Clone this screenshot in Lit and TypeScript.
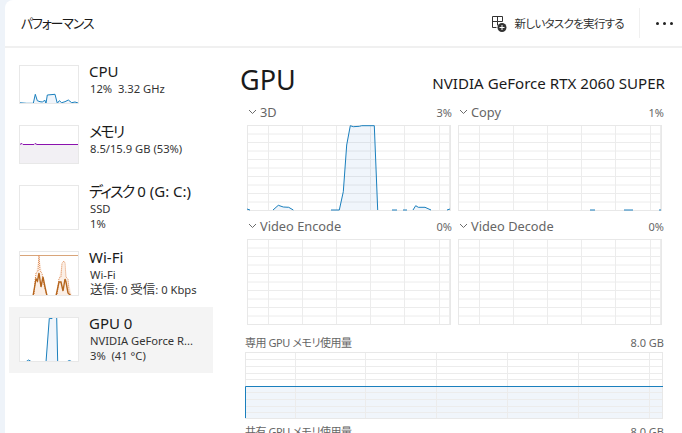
import { html, css, svg, LitElement } from "lit";
import { customElement } from "lit/decorators.js";

type Pt = [number, number];

const BLUE = "#1a7fbd";
// low opacity dark blue, so that the grid still shows through the area
const FILL = "#2a78c0";
const FILL_OP = "0.07";

const line = (pts: Pt[]) => pts.map((p) => p.join(",")).join(" ");

// a trace with the pale area down to the bottom of the chart
const trace = (pts: Pt[], bottom: number) => {
  const area: Pt[] = [[pts[0][0], bottom], ...pts, [pts[pts.length - 1][0], bottom]];
  return svg`
    <polygon points=${line(area)} fill=${FILL} fill-opacity=${FILL_OP}></polygon>
    <polyline points=${line(pts)} fill="none" stroke=${BLUE} stroke-width="1"></polyline>
  `;
};

const grid = (w: number, h: number, xs: number[], ys: number[]) => svg`
  ${xs.map((x) => svg`<line x1=${x + 0.5} x2=${x + 0.5} y1="0" y2=${h} stroke="#ececec"></line>`)}
  ${ys.map((y) => svg`<line x1="0" x2=${w} y1=${y + 0.5} y2=${y + 0.5} stroke="#ececec"></line>`)}
  <rect x="0.5" y="0.5" width=${w - 1} height=${h - 1} fill="none" stroke="#e8e8e8"></rect>
`;

const smallX = [21, 55, 89, 123, 157, 192, 202];
const smallY = [8.5, 17, 25.5, 34, 42.5, 51, 59.5, 68, 76.5];

const bigChart = (content: unknown = null) => html`
  <svg class="chart" width="204" height="86" viewBox="0 0 204 86">
    ${grid(204, 86, smallX, smallY)} ${content}
  </svg>
`;

const threeD = svg`
  ${trace([[84, 85], [92.3, 85], [96.3, 66.7], [99.7, 20], [103.3, 0.7], [106.3, 1.7], [112.3, 1.3], [114.7, 0.7], [127.3, 0.7], [130.7, 85]], 85)}
  ${trace([[26, 85], [31.3, 80.3], [36.3, 82], [41.7, 82.3], [46.3, 85]], 85)}
  ${trace([[166, 85], [168.7, 80.7], [171.3, 82.3], [178, 82.3], [184, 85]], 85)}
  <polyline points="145,85 150,85" fill="none" stroke=${BLUE}></polyline>
  <polyline points="156,85 160,85" fill="none" stroke=${BLUE}></polyline>
  <polyline points="200,85 203,84" fill="none" stroke=${BLUE}></polyline>
  <polyline points="0,84 3,85" fill="none" stroke=${BLUE}></polyline>
`;

const copy = svg`
  <polyline points="132,85 137,85" fill="none" stroke=${BLUE}></polyline>
  <polyline points="166,85 175,85" fill="none" stroke=${BLUE}></polyline>
  <polyline points="201,85 203,85" fill="none" stroke=${BLUE}></polyline>
`;

const memXs = [50, 120, 191, 262, 333, 404];
const memYs = [7, 14, 21, 27, 34, 40, 47, 54, 60];

const thumbs = {
  cpu: svg`
    ${trace([[0, 37.7], [7.7, 38.3], [14.3, 38.3], [16.3, 29.3], [18.3, 35.7], [21, 36.7], [23.7, 37], [25.7, 35], [27, 38.3], [28.3, 30], [36, 29.3], [38.3, 38.3], [40.3, 35.7], [42.7, 37.7], [46, 36.7], [49.3, 35], [52.7, 37.7], [56, 37], [60, 38.3]], 39)}
  `,
  mem: svg`
    <polygon points="0,19 60,19 60,39 0,39" fill="#f2f0f4"></polygon>
    <polyline points="0.5,39 0.5,19.5 3,18.5 4,19.5 15,19.5 16,18.5 18,19.5 60,19.5" fill="none" stroke="#8b12ae"></polyline>
  `,
  wifi: svg`
    <line x1="1" x2="60" y1="4.5" y2="4.5" stroke="#d9a57a"></line>
    <polygon points="14,45 17,22 20,4 23,22 25,34 29,45" fill="#fbefe6"></polygon>
    <polygon points="37,45 40,27 43,12 45,10 47,26 49,28 53,45" fill="#fbefe6"></polygon>
    <polyline points="15,45 16,30 17,22 19,20 20,4 21,20 23,22 25,34 28,45" fill="none" stroke="#e08a52" stroke-dasharray="1 1"></polyline>
    <polyline points="38,45 40,27 42,26 43,12 45,10 46,12 47,26 49,28 50,40 52,45" fill="none" stroke="#e08a52" stroke-dasharray="1 1"></polyline>
    <polyline points="14,45 17,28 18.5,30 20,22 22,36 24,26 26,36 28,45" fill="none" stroke="#b5651d" stroke-width="1.4"></polyline>
    <polyline points="37,45 40,31 42,31 44,40 46,28 47,31 49,42 52,45" fill="none" stroke="#b5651d" stroke-width="1.4"></polyline>
    <line x1="7" x2="9" y1="44.5" y2="44.5" stroke="#c9743a"></line>
  `,
  gpu: svg`
    ${trace([[27, 45], [30.3, 1.3], [33, 1.6], [34, 0.5], [37.7, 0.5], [38.7, 45]], 45)}
    ${trace([[7, 44.7], [9.7, 43], [12.3, 44.7]], 45)}
    ${trace([[48, 44.7], [50.3, 43.5], [53, 44.7]], 45)}
  `,
};

const kana = (t: string) => html`<span class="kana">${t}</span>`;
const wide = (t: string) => html`<span class="wide-cjk">${t}</span>`;

const sidebar = [
  { name: html`CPU`, lines: [html`12%\u00a0 3.32 GHz`], h: 39, g: thumbs.cpu },
  { name: kana("メモリ"), lines: [html`8.5/15.9 GB (53%)`], h: 39, g: thumbs.mem },
  { name: html`${kana("ディスク")} 0 (G: C:)`, lines: [html`SSD`, html`1%`], h: 45, g: null },
  { name: html`Wi-Fi`, lines: [html`Wi-Fi`, html`${wide("送信")}: 0 ${wide("受信")}: 0 Kbps`], h: 45, g: thumbs.wifi },
  { name: html`GPU 0`, lines: [html`NVIDIA GeForce R...`, html`3%\u00a0 (41 °C)`], h: 45, g: thumbs.gpu, selected: true },
];

const chevron = html`
  <svg class="chev" width="9" height="6" viewBox="0 0 9 6">
    <path d="M1 1l3.5 3.5L8 1" fill="none" stroke="#6b6b6b" stroke-width="1"></path>
  </svg>
`;

@customElement("app-root")
export class AppRoot extends LitElement {
  static styles = css`
    :host {
      display: block;
      width: 682px;
      height: 433px;
      overflow: hidden;
      background: #eef3f9;
      font-family: "Noto Sans", "Noto Sans CJK JP", sans-serif;
      font-feature-settings: "palt";
      color: #1a1a1a;
    }

    .panel {
      margin-left: 5px;
      height: 433px;
      background: #fff;
      border-top-left-radius: 8px;
      overflow: hidden;
    }

    .head {
      height: 46px;
      border-bottom: 2px solid #f0f0f0;
      display: flex;
      align-items: center;
      padding-left: 16px;
    }

    .head h1 {
      margin: 0 0 2px;
      font-size: 13px;
      font-weight: 400;
      letter-spacing: -1.2px;
      flex: 1;
    }

    .run {
      display: flex;
      align-items: center;
      gap: 8px;
      font-size: 11.5px;
      letter-spacing: -0.7px;
      color: #333;
    }

    .sep {
      width: 1px;
      height: 30px;
      background: #f0f0f0;
      margin-left: 15px;
    }

    .dots {
      display: flex;
      gap: 4px;
      padding: 0 9px 0 16px;
    }

    .dots i {
      width: 3px;
      height: 3px;
      border-radius: 50%;
      background: #222;
    }

    .body {
      display: flex;
    }

    .side {
      width: 204px;
      margin-left: 4px;
      padding-top: 7px;
      flex: none;
    }

    .item {
      display: flex;
      gap: 10px;
      padding: 6px 0 11px 10px;
    }

    .item.on {
      background: #f4f4f4;
    }

    .thumb {
      display: block;
      flex: none;
      margin-top: 4px;
      background: #fff;
    }

    .text {
      margin-bottom: -6px;
    }

    .name {
      font-size: 15px;
      line-height: 20px;
      white-space: nowrap;
    }

    .kana {
      letter-spacing: -1.8px;
    }

    .sub {
      font-size: 11.2px;
      line-height: 15px;
      padding-left: 1px;
      color: #333;
      white-space: nowrap;
    }

    .wide-cjk {
      font-size: 12.5px;
    }

    .main {
      margin-left: 27px;
      width: 425px;
    }

    .title {
      display: flex;
      justify-content: space-between;
      align-items: center;
      height: 42px;
      margin: 10px 0 4px;
    }

    .title h2 {
      margin: 0;
      font-size: 27px;
      font-weight: 400;
    }

    .title span {
      font-size: 15.1px;
      margin-top: 8px;
    }

    .charts {
      display: grid;
      grid-template-columns: 205px 206px;
      column-gap: 6px;
      row-gap: 7px;
      margin-left: 7px;
    }

    .label {
      display: flex;
      align-items: center;
      height: 16px;
      margin-bottom: 5px;
      font-size: 12.8px;
      color: #666;
    }

    .label b {
      font-weight: 400;
      flex: 1;
    }

    .label small {
      font-size: 11px;
    }

    .chev {
      margin: 0 3px 0 1px;
    }

    .chart {
      display: block;
    }

    .wide {
      margin: 9px 0 0 5px;
      width: 419px;
    }

    .wide .label {
      margin-bottom: 2px;
      font-size: 11px;
    }

    .wide .label b {
      letter-spacing: -0.45px;
    }

    .wide .chart {
      margin-bottom: 4px;
    }
  `;

  section(label: string, value: string, content: unknown = null) {
    return html`
      <div>
        <div class="label">${chevron}<b>${label}</b><small>${value}</small></div>
        ${bigChart(content)}
      </div>
    `;
  }

  render() {
    return html`
      <div class="panel">
        <div class="head">
          <h1>パフォーマンス</h1>
          <div class="run">
            <svg width="16" height="17" viewBox="0 0 16 17">
              <path d="M1.5 1.5h10v5h-5v-5M1.5 1.5v11h4M1.5 6.5h5v4" fill="none" stroke="#333"></path>
              <circle cx="11" cy="12.5" r="4.5" fill="#333"></circle>
              <path d="M11 10v5M8.5 12.5h5" stroke="#fff"></path>
            </svg>
            新しいタスクを実行する
          </div>
          <div class="sep"></div>
          <div class="dots"><i></i><i></i><i></i></div>
        </div>
        <div class="body">
          <div class="side">
            ${sidebar.map(
              (s) => html`
                <div class="item ${s.selected ? "on" : ""}">
                  <svg class="thumb" width="60" height=${s.h} viewBox="0 0 60 ${s.h}">
                    ${s.g}
                    <rect x="0.5" y="0.5" width="59" height=${s.h - 1} fill="none" stroke="#e8e8e8"></rect>
                  </svg>
                  <div class="text">
                    <div class="name">${s.name}</div>
                    ${s.lines.map((l) => html`<div class="sub">${l}</div>`)}
                  </div>
                </div>
              `
            )}
          </div>
          <div class="main">
            <div class="title">
              <h2>GPU</h2>
              <span>NVIDIA GeForce RTX 2060 SUPER</span>
            </div>
            <div class="charts">
              ${this.section("3D", "3%", threeD)} ${this.section("Copy", "1%", copy)}
              ${this.section("Video Encode", "0%")} ${this.section("Video Decode", "0%")}
            </div>
            <div class="wide">
              <div class="label"><b>専用 GPU メモリ使用量</b><small>8.0 GB</small></div>
              <svg class="chart" width="418" height="67" viewBox="0 0 418 67">
                <rect x="0" y="34" width="418" height="33" fill=${FILL} fill-opacity=${FILL_OP}></rect>
                ${grid(418, 67, memXs, memYs)}
                <polyline points="0.5,66 0.5,34.5 418,34.5" fill="none" stroke=${BLUE}></polyline>
              </svg>
              <div class="label"><b>共有 GPU メモリ使用量</b><small>8.0 GB</small></div>
            </div>
          </div>
        </div>
      </div>
    `;
  }
}
